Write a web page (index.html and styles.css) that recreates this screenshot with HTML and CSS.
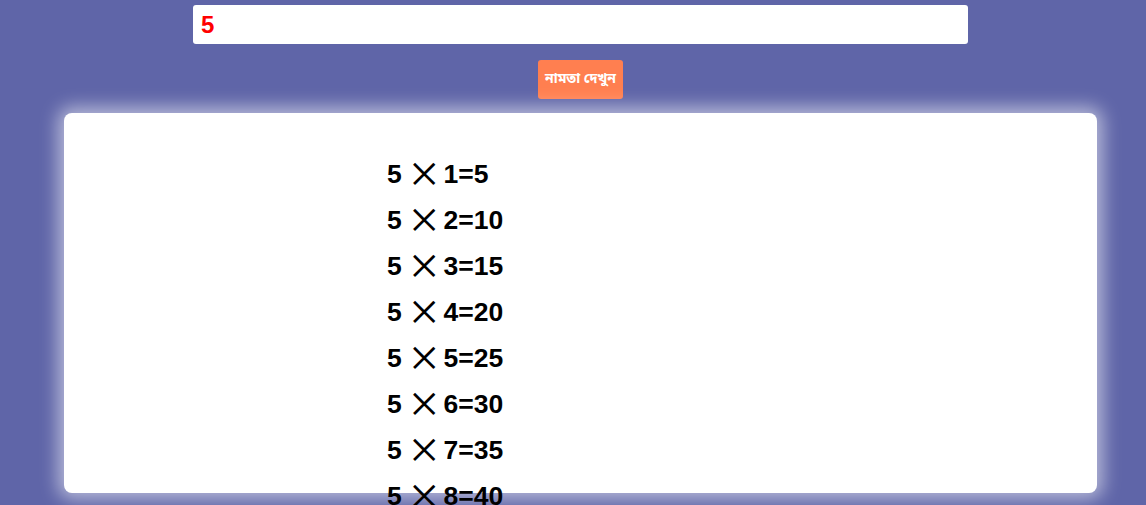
FILE: index.html
```html
<!DOCTYPE html>
<html lang="bn">
<head>
<meta charset="utf-8">
<title>নামতা</title>
<link rel="stylesheet" href="styles.css">
</head>
<body>
<div class="page">
  <input class="num-input" type="text" value="5">
  <button class="show-btn">নামতা দেখুন</button>
  <div class="result">
    <div class="table">
      <div class="row">5 <span class="x">✕</span> 1=5</div>
      <div class="row">5 <span class="x">✕</span> 2=10</div>
      <div class="row">5 <span class="x">✕</span> 3=15</div>
      <div class="row">5 <span class="x">✕</span> 4=20</div>
      <div class="row">5 <span class="x">✕</span> 5=25</div>
      <div class="row">5 <span class="x">✕</span> 6=30</div>
      <div class="row">5 <span class="x">✕</span> 7=35</div>
      <div class="row">5 <span class="x">✕</span> 8=40</div>
      <div class="row">5 <span class="x">✕</span> 9=45</div>
      <div class="row">5 <span class="x">✕</span> 10=50</div>
    </div>
  </div>
</div>
</body>
</html>
```

FILE: styles.css
```css
html, body {
  margin: 0;
  padding: 0;
  background: #5f65a8;
  height: 100%;
  overflow: hidden;
}
.page {
  margin-left: 15px;
  padding-top: 5px;
  display: flex;
  flex-direction: column;
  align-items: center;
}
.num-input {
  box-sizing: border-box;
  width: 775px;
  height: 39px;
  border: none;
  border-radius: 3px;
  background: #fff;
  padding: 0 8px;
  font-family: "Liberation Sans", Arial, sans-serif;
  font-weight: 900;
  font-size: 24px;
  color: #ff0000;
  outline: none;
}
.show-btn {
  margin-top: 16px;
  box-sizing: border-box;
  width: 85px;
  height: 39px;
  border: none;
  border-radius: 3px;
  background: #ff7f50;
  color: #fff;
  font-family: "Noto Sans Bengali", "Noto Sans", sans-serif;
  font-weight: bold;
  font-size: 14px;
  padding: 0;
}
.result {
  margin-top: 14px;
  box-sizing: border-box;
  width: 1033px;
  height: 380px;
  background: #fff;
  border-radius: 8px;
  box-shadow: 0 0 18px 6px rgba(255, 255, 255, 0.55);
  padding: 38px 0 0 323px;
}
.table {
  font-family: "Liberation Sans", Arial, sans-serif;
  font-weight: bold;
  font-size: 26.5px;
  line-height: 46px;
  color: #000;
}
.row {
  white-space: nowrap;
}
.x {
  font-family: "DejaVu Sans", sans-serif;
  font-weight: 200;
  font-size: 32px;
  line-height: 0;
  vertical-align: -2px;
  margin-left: 3px;
}
```
